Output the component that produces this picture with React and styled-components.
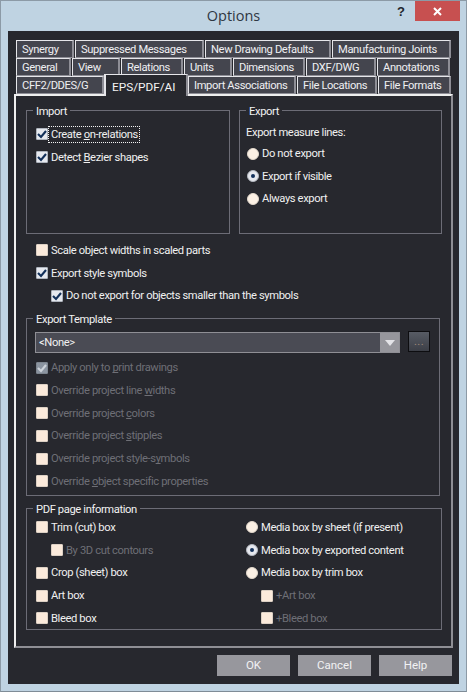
import React from "react";
import styled, { createGlobalStyle } from "styled-components";

const Global = createGlobalStyle`
  html, body { margin: 0; padding: 0; background: #bfd3e2; overflow: hidden; }
  * { box-sizing: border-box; }
  u { text-decoration-thickness: 1px; text-underline-offset: 1px; text-decoration-skip-ink: none; }
`;

const Window = styled.div`
  width: 467px; height: 692px; background: #bfd3e2;
  border: 1px solid #8c9aa6; border-bottom-color: #7f8c97;
  display: flex; flex-direction: column;
  font-family: "Roboto", "Liberation Sans", sans-serif; font-size: 11.2px; letter-spacing: -0.38px; color: #f0f0f0;
`;
const TitleBar = styled.div`
  height: 30px; flex: none; display: grid; grid-template-columns: 1fr auto 1fr; padding: 0 6px; letter-spacing: 0;
`;
const Title = styled.div`
  font-family: "Open Sans", sans-serif; font-size: 14.5px; color: #2f3742; line-height: 30px;
`;
const Controls = styled.div`
  grid-column: 3; justify-self: end; display: flex; align-items: flex-start;
`;
const Help = styled.div`
  font: bold 13px/21px "Liberation Sans", sans-serif; color: #22262c; margin-right: 10px;
`;
const Close = styled.div`
  width: 45px; height: 20px; background: #c75050; display: flex; align-items: center; justify-content: center;
`;
const Client = styled.div`
  flex: 1; margin: 0 7px 7px; background: #27282e; padding: 9px 6px 0;
  display: flex; flex-direction: column;
`;
const TabStrip = styled.div`
  display: flex; flex-direction: column; padding-left: 2px; flex: none; position: relative; z-index: 1;
`;
const TabRow = styled.div`
  display: flex; height: 18px; gap: 1px; align-items: flex-end;
`;
const Tab = styled.div`
  width: ${p => p.$w}px; height: 18px; flex: none;
  background: #44454e; color: #efeff2;
  border-top: 1px solid #e6e6ea; border-left: 1px solid #e6e6ea;
  border-right: 2px solid #8e8e96; border-bottom: 1px solid #8e8e96;
  padding-left: 5px; line-height: 17px; white-space: nowrap;
`;
const ActiveTab = styled.div`
  width: ${p => p.$w}px; height: 22px; flex: none; margin-bottom: -2px; margin-right: -1px; margin-left: -1px;
  background: #27282e; color: #f4f4f4;
  border-top: 1px solid #e6e6ea; border-left: 2px solid #e6e6ea; border-right: 2px solid #8e8e96;
  padding-left: 6px; line-height: 24px; font-size: 11.8px; letter-spacing: 0; white-space: nowrap;
`;
const Panel = styled.div`
  width: 439px; height: 554px; flex: none;
  border-top: 2px solid #efefef; border-left: 2px solid #efefef;
  border-right: 2px solid #8f8f95; border-bottom: 2px solid #8f8f95;
  padding: 5px 0 0 10px;
`;
const TopGroups = styled.div`
  display: grid; grid-template-columns: 204px 203px; gap: 9px; height: 133px;
`;
const Group = styled.fieldset`
  margin: 0; padding: 0 8px 0 9px; min-width: 0;
  border: 1px solid #6c6c76;
  ${p => p.$w ? `width: ${p.$w}px;` : ""}
  ${p => p.$h ? `height: ${p.$h}px;` : ""}
  ${p => p.$mt ? `margin-top: ${p.$mt}px;` : ""}
`;
const Legend = styled.legend`
  padding: 4px 3px 0; margin: 0 0 -2px -3px; line-height: 14px; color: #f2f2f2;
`;
const Rows = styled.div`
  display: flex; flex-direction: column;
  padding-top: ${p => p.$pt || 0}px;
  padding-left: ${p => p.$pl || 0}px;
  margin-left: ${p => p.$ml || 0}px;
`;
const Row = styled.div`
  height: ${p => p.$h || 22.75}px; display: flex; align-items: center; flex: none;
  padding-left: ${p => p.$indent || 0}px;
  color: ${p => p.$disabled ? "#6e6f76" : "#f0f0f0"};
  white-space: nowrap;
`;
const Box = styled.span`
  width: 12px; height: 12px; flex: none; margin-right: 3px; display: inline-flex;
  align-items: center; justify-content: center; border-radius: 1px;
  background: ${p => p.$checked ? (p.$disabled ? "#8b94a0" : "#e6e9ef") : "#fbeadb"};
  border: 1px solid ${p => p.$checked ? (p.$disabled ? "#7d858f" : "#aeb4bd") : "#dcd0c4"};
`;
const Radio = styled.span`
  width: 12px; height: 12px; flex: none; margin-right: 3px; border-radius: 50%;
  display: inline-flex; align-items: center; justify-content: center;
  background: ${p => p.$checked ? "#e6e8ee" : "#fbf0e4"};
  border: 1px solid ${p => p.$checked ? "#b4b8c0" : "#e2d8cc"};
`;
const Dot = styled.span`
  width: 4px; height: 4px; border-radius: 50%; background: #12305a;
`;
const Focus = styled.span`
  outline: 1px dotted #f4f4f4; outline-offset: 1px; margin-left: -1px; padding-left: 1px;
`;
const ComboLine = styled.div`
  display: flex; align-items: flex-start; margin: 7px 0 0 -1px; gap: 8px;
`;
const Combo = styled.div`
  width: 365px; height: 21px; display: flex; border: 1px solid #8f8f95; background: #4a4b54;
`;
const ComboText = styled.div`
  flex: 1; padding-left: 3px; line-height: 20px;
`;
const ComboArrow = styled.div`
  width: 19px; background: #96969c; display: flex; align-items: center; justify-content: center;
`;
const Browse = styled.div`
  width: 22px; height: 21px; margin-top: -1px; border: 1px solid #0d0d10;
  background: linear-gradient(#575b64, #3c3f47);
  color: #a08a7a; font-size: 11px; line-height: 19px; text-align: center; letter-spacing: 0.5px;
`;
const TwoCols = styled.div`
  display: grid; grid-template-columns: 210px 1fr;
`;
const Footer = styled.div`
  display: flex; justify-content: flex-end; gap: 8px; margin-top: 7px; padding-right: 1px; width: 439px;
`;
const Button = styled.div`
  width: 73px; height: 21px; background: #97979d; color: #f2f2f4; text-align: center; line-height: 21px;
  letter-spacing: 0; font-size: 11.5px;
`;

const CheckMark = ({ disabled }) => (
  <svg width="10" height="10" viewBox="0 0 10 10">
    <path d="M1 5 L4 8 L9 2" fill="none" stroke={disabled ? "#cdd3da" : "#12305a"} strokeWidth="2.1" />
  </svg>
);
const Check = ({ checked, disabled, indent, h, children }) => (
  <Row $disabled={disabled} $indent={indent} $h={h}>
    <Box $checked={checked} $disabled={disabled}>{checked && <CheckMark disabled={disabled} />}</Box>
    <span>{children}</span>
  </Row>
);
const Opt = ({ checked, indent, h, children }) => (
  <Row $indent={indent} $h={h}>
    <Radio $checked={checked}>{checked && <Dot />}</Radio>
    <span>{children}</span>
  </Row>
);

const row1 = [["Synergy", 58], ["Suppressed Messages", 129], ["New Drawing Defaults", 126], ["Manufacturing Joints", 119]];
const row2 = [["General", 55], ["View", 48], ["Relations", 62], ["Units", 48], ["Dimensions", 72], ["DXF/DWG", 70], ["Annotations", 73]];

export default function App() {
  return (
    <Window>
      <Global />
      <TitleBar>
        <span />
        <Title>Options</Title>
        <Controls>
          <Help>?</Help>
          <Close>
            <svg width="9" height="9" viewBox="0 0 9 9">
              <path d="M1 1 L8 8 M8 1 L1 8" stroke="#fff" strokeWidth="2" />
            </svg>
          </Close>
        </Controls>
      </TitleBar>
      <Client>
        <TabStrip>
          <TabRow>{row1.map(([t, w]) => <Tab key={t} $w={w}>{t}</Tab>)}</TabRow>
          <TabRow>{row2.map(([t, w]) => <Tab key={t} $w={w}>{t}</Tab>)}</TabRow>
          <TabRow>
            <Tab $w={88}>CFF2/DDES/G</Tab>
            <ActiveTab $w={84}>EPS/PDF/AI</ActiveTab>
            <Tab $w={108}>Import Associations</Tab>
            <Tab $w={80}>File Locations</Tab>
            <Tab $w={73}>File Formats</Tab>
          </TabRow>
        </TabStrip>
        <Panel>
          <TopGroups>
            <Group>
              <Legend>Import</Legend>
              <Rows $pt={6}>
                <Check checked><Focus>Create <u>o</u>n-relations</Focus></Check>
                <Check checked>Detect <u>B</u>ezier shapes</Check>
              </Rows>
            </Group>
            <Group>
              <Legend>Export</Legend>
              <Rows $pt={5.5} $ml={-3}>
                <Row $h={20}>Export measure lines:</Row>
                <Opt h={22.5} indent={1}>Do not export</Opt>
                <Opt h={22.5} indent={1} checked>Export if visible</Opt>
                <Opt h={22.5} indent={1}>Always export</Opt>
              </Rows>
            </Group>
          </TopGroups>
          <Rows $pt={5} $pl={10}>
            <Check>Scale object widths in scaled parts</Check>
            <Check checked>Export style symbols</Check>
            <Check checked indent={15}>Do not export for objects smaller than the symbols</Check>
          </Rows>
          <Group $w={414} $h={187} $mt={2}>
            <Legend>Export Template</Legend>
            <ComboLine>
              <Combo>
                <ComboText>&lt;None&gt;</ComboText>
                <ComboArrow>
                  <svg width="10" height="6" viewBox="0 0 10 6"><path d="M0 0 H10 L5 6 Z" fill="#e4e4e8" /></svg>
                </ComboArrow>
              </Combo>
              <Browse>...</Browse>
            </ComboLine>
            <Rows $pt={3}>
              <Check checked disabled>Apply only to <u>p</u>rint drawings</Check>
              <Check disabled>Override project line <u>w</u>idths</Check>
              <Check disabled>Override project <u>c</u>olors</Check>
              <Check disabled>Override project <u>s</u>tipples</Check>
              <Check disabled>Override project style-s<u>y</u>mbols</Check>
              <Check disabled>Override <u>o</u>bject specific properties</Check>
            </Rows>
          </Group>
          <Group $w={416} $h={131} $mt={3}>
            <Legend>PDF page information</Legend>
            <TwoCols>
              <Rows $pt={0.7}>
                <Check>Trim (cut) box</Check>
                <Check disabled indent={15}>By 3D cut contours</Check>
                <Check>Crop (sheet) box</Check>
                <Check>Art box</Check>
                <Check>Bleed box</Check>
              </Rows>
              <Rows $pt={0.7}>
                <Opt>Media box by sheet (if present)</Opt>
                <Opt checked>Media box by exported content</Opt>
                <Opt>Media box by trim box</Opt>
                <Check disabled indent={15}>+Art box</Check>
                <Check disabled indent={15}>+Bleed box</Check>
              </Rows>
            </TwoCols>
          </Group>
        </Panel>
        <Footer>
          <Button>OK</Button>
          <Button>Cancel</Button>
          <Button>Help</Button>
        </Footer>
      </Client>
    </Window>
  );
}
